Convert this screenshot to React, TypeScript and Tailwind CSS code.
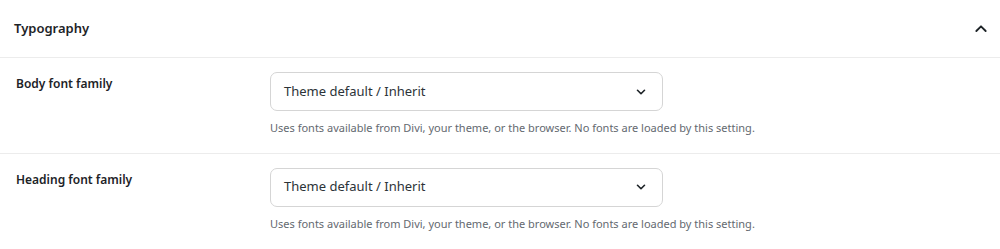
import React from "react";

const Chevron = ({ up = false, className = "" }: { up?: boolean; className?: string }) => (
  <svg viewBox="0 0 24 24" className={className} fill="none" stroke="currentColor" strokeWidth={2.8} strokeLinecap="round" strokeLinejoin="round">
    {up ? <path d="M5 15l7-7 7 7" /> : <path d="M6 9l6 6 6-6" />}
  </svg>
);

const Row = ({ label }: { label: string }) => (
  <div className="flex border-b border-[#ececec] pt-[14px] pb-[16px] last:border-b-0">
    <div className="w-[270px] pl-[16px] pt-[3px] text-[12px] font-semibold text-[#1d2327]">{label}</div>
    <div className="flex flex-col">
      <div className="flex h-[39px] w-[393px] items-center justify-between rounded-[7px] border border-[#d5d5d5] bg-white pl-[13px] pr-[14px] text-[13px] text-[#2c3338]">
        <span>Theme default / Inherit</span>
        <Chevron className="h-[14px] w-[14px] text-[#1d2327]" />
      </div>
      <div className="mt-[9px] text-[11px] text-[#646970]">
        Uses fonts available from Divi, your theme, or the browser. No fonts are loaded by this setting.
      </div>
    </div>
  </div>
);

export default function App() {
  return (
    <div className="h-[249px] w-[1000px] overflow-hidden bg-white" style={{ fontFamily: '"Noto Sans", "Open Sans", sans-serif' }}>
      <div className="flex h-[58px] items-center justify-between border-b border-[#ececec] pl-[14px] pr-[11px]">
        <span className="text-[13px] font-semibold text-[#1d2327]">Typography</span>
        <Chevron up className="h-[16px] w-[16px] text-[#1d2327]" />
      </div>
      <Row label="Body font family" />
      <Row label="Heading font family" />
    </div>
  );
}
